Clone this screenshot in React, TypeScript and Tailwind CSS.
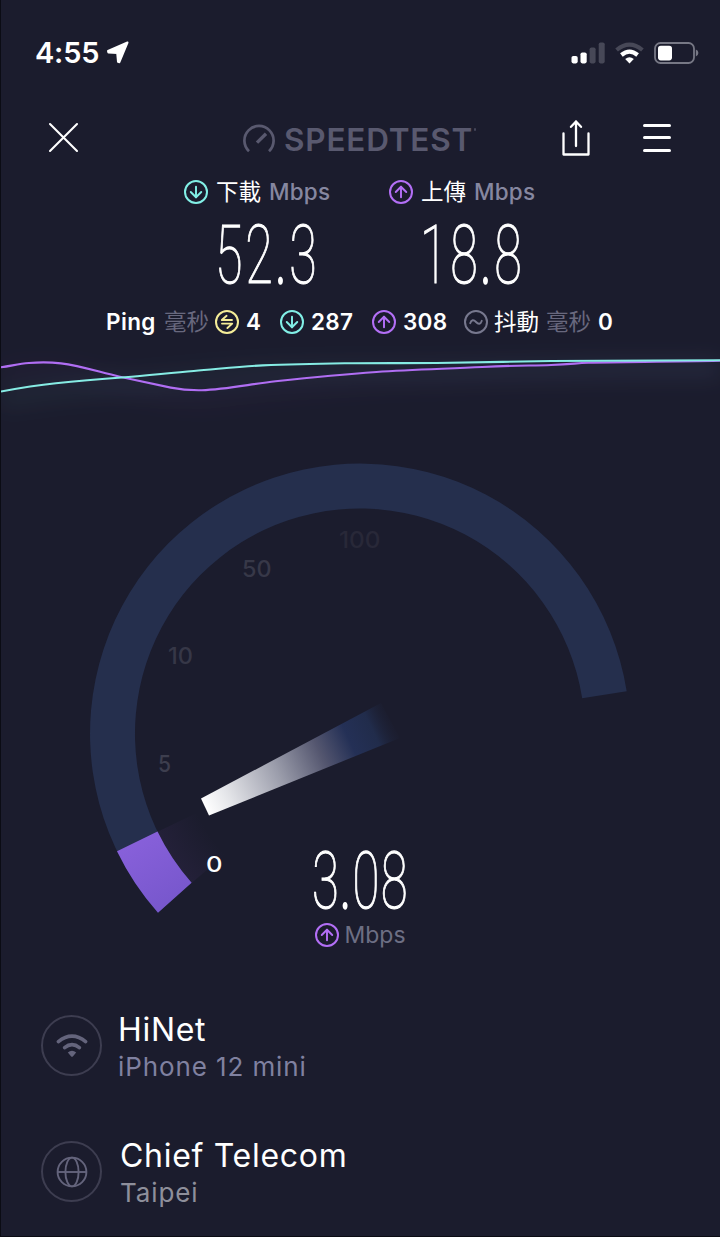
import { ArrowDown, ArrowUp } from 'lucide-react'
import type { ReactNode } from 'react'

const gaugeTicks = [
  { label: '5', x: 158, y: 356, width: 13, fill: '#3d3e4e' },
  { label: '10', x: 168, y: 248, width: 25, fill: '#363747' },
  { label: '50', x: 242, y: 161, width: 29.5, fill: '#373848' },
  { label: '100', x: 339, y: 131.5, width: 41.5, fill: '#282838' },
]

const connections = [
  {
    id: 'client',
    title: 'HiNet',
    subtitle: 'iPhone 12 mini',
    textClass: 'ml-4',
    subtitleClass: 'text-[#8081a0]',
    icon: <WifiGlyph />,
  },
  {
    id: 'server',
    title: 'Chief Telecom',
    subtitle: 'Taipei',
    textClass: 'ml-[18px]',
    subtitleClass: 'text-[#8e8f9b]',
    icon: <GlobeGlyph />,
  },
]

function WifiGlyph() {
  return (
    <svg width="32" height="24" viewBox="0 0 32 24" fill="none" stroke="#64647c" strokeWidth="3.6" strokeLinecap="round" aria-hidden>
      <path d="M2.4 7.6 Q16 -3.4 29.6 7.6" />
      <path d="M8.6 13.6 Q16 7.6 23.4 13.6" />
      <path d="M11.8 18.4 Q16 15 20.2 18.4 L16.8 22.4 Q16 23 15.2 22.4 Z" fill="#64647c" stroke="none" />
    </svg>
  )
}

function GlobeGlyph() {
  return (
    <svg width="32" height="32" viewBox="0 0 32 32" fill="none" stroke="#64647c" strokeWidth="1.9" aria-hidden>
      <circle cx="16" cy="16" r="14.4" />
      <ellipse cx="16" cy="16" rx="6.6" ry="14.4" />
      <path d="M1.6 16h28.8" />
    </svg>
  )
}

function RoundIcon({ colorClass, children }: { colorClass: string; children: ReactNode }) {
  return (
    <span className={`flex h-6 w-6 shrink-0 items-center justify-center rounded-full border-2 ${colorClass}`}>
      {children}
    </span>
  )
}

function DownIcon() {
  return (
    <RoundIcon colorClass="border-[#82efe6] text-[#82efe6]">
      <ArrowDown className="shrink-0" size={18} strokeWidth={2.6} aria-hidden />
    </RoundIcon>
  )
}

function UpIcon() {
  return (
    <RoundIcon colorClass="border-[#b36ff6] text-[#b36ff6]">
      <ArrowUp className="shrink-0" size={18} strokeWidth={2.6} aria-hidden />
    </RoundIcon>
  )
}

function StatusBar() {
  return (
    <div className="flex h-[105px] items-center pl-[34px]">
      <span className="w-[65px] text-[29px] leading-none font-semibold tracking-[-0.2px] whitespace-nowrap">4:55</span>
      <svg className="ml-[6px]" width="23" height="23" viewBox="0 0 23 23" fill="#fff" stroke="#fff" strokeWidth="2" strokeLinejoin="round" aria-hidden>
        <path d="M21.5 1.5 L2 10 L2.4 11.6 L11.2 12 L12 20.8 L13.4 21.2 Z" />
      </svg>
      <div className="mr-[21px] ml-auto flex items-center">
        <svg width="34" height="22" viewBox="0 0 34 22" aria-hidden>
          <rect x="0.5" y="14" width="6.2" height="7.4" rx="1.8" fill="#fff" />
          <rect x="9.5" y="10.5" width="6.2" height="10.9" rx="1.8" fill="#fff" />
          <rect x="18.6" y="5.5" width="6" height="15.9" rx="1.8" fill="#474857" />
          <rect x="27.7" y="0.5" width="6" height="20.9" rx="1.8" fill="#474857" />
        </svg>
        <svg className="ml-[10px]" width="29" height="22" viewBox="0 0 29 22" fill="none" strokeWidth="4.2" aria-hidden>
          <path d="M1.6 8 Q14.5 -2.6 27.4 8" stroke="#474857" />
          <path d="M6.4 13 Q14.5 6.4 22.6 13" stroke="#fff" />
          <path d="M10.2 17 Q14.5 13.4 18.8 17 L14.5 21.4 Z" fill="#fff" />
        </svg>
        <svg className="ml-[10px]" width="45" height="22" viewBox="0 0 45 22" aria-hidden>
          <rect x="1" y="1" width="39" height="20" rx="5.5" fill="none" stroke="#777885" strokeWidth="1.8" />
          <rect x="4" y="3.8" width="14" height="14.6" rx="2.8" fill="#fff" />
          <path d="M41.8 7.6 Q44.4 8.6 44.4 11 Q44.4 13.4 41.8 14.4 Z" fill="#777885" />
        </svg>
      </div>
    </div>
  )
}

function Header() {
  return (
    <header className="flex h-[65px] items-center">
      <button type="button" className="ml-[47px]" aria-label="關閉">
        <svg width="31" height="31" viewBox="0 0 31 31" stroke="#fff" strokeWidth="2.1" strokeLinecap="round" aria-hidden>
          <path d="M2 2l27 27M29 2L2 29" />
        </svg>
      </button>
      <div className="ml-[163px] flex w-[237px] items-center">
        <svg className="mt-[2px] shrink-0" width="34" height="30" viewBox="0 0 34 30" fill="none" stroke="#59596f" strokeWidth="2.7" aria-hidden>
          <path d="M7 27.2 A14.6 14.6 0 1 1 27 27.2" />
          <path d="M15 18.6 L24 9.8" strokeWidth="3.4" />
        </svg>
        <span className="mt-[4px] ml-[8px] w-[190px] shrink-0 text-[31.5px] leading-none font-semibold tracking-[0.8px] whitespace-nowrap text-[#59596f]">
          SPEEDTEST
        </span>
        <span className="mb-4 h-[3px] w-[2px] shrink-0 rounded-full bg-[#454559]" />
      </div>
      <button type="button" className="ml-[83px]" aria-label="分享">
        <svg width="28" height="36" viewBox="0 0 28 36" fill="none" stroke="#fff" strokeWidth="2.3" strokeLinecap="round" strokeLinejoin="round" aria-hidden>
          <path d="M1.5 13.5V34.5H26.5V13.5" />
          <path d="M14 26V1.5M9 6.8L14 1.5L19 6.8" />
        </svg>
      </button>
      <button type="button" className="mr-[49px] ml-auto flex w-7 flex-col gap-[9.5px]" aria-label="選單">
        <span className="h-[3px] w-full rounded-full bg-white" />
        <span className="h-[3px] w-full rounded-full bg-white" />
        <span className="h-[3px] w-full rounded-full bg-white" />
      </button>
    </header>
  )
}

// Tall hairline digits: thin Roboto squeezed horizontally, with a heavier decimal point
function ThinNumber({ value, sizeClass }: { value: string; sizeClass: string }) {
  const [whole, fraction] = value.split('.')

  return (
    <span
      className={`block h-[60px] origin-left scale-x-[0.62] pt-px font-[Roboto] leading-[60px] font-thin whitespace-nowrap [-webkit-text-stroke:1.1px_white] ${sizeClass}`}
    >
      {whole}
      <span className="[-webkit-text-stroke:3.5px_white]">.</span>
      {fraction}
    </span>
  )
}

function SpeedResult({ icon, label, value }: { icon: ReactNode; label: string; value: string }) {
  return (
    <div className="w-[148px]">
      <div className="flex h-11 items-center">
        {icon}
        <span className="ml-2 w-[45px] text-[22.5px] leading-none whitespace-nowrap">{label}</span>
        <span className="ml-2 text-[22.5px] leading-none font-medium tracking-[0.2px] whitespace-nowrap text-[#8687a0]">Mbps</span>
      </div>
      <div className="mt-[11px] w-[100px] pl-[31px]">
        <ThinNumber value={value} sizeClass="text-[81px] tracking-[4.5px]" />
      </div>
    </div>
  )
}

function LatencyRow() {
  return (
    <div className="mt-[15px] flex h-11 items-center pl-[105px] text-[22.5px] leading-none whitespace-nowrap">
      <span className="w-[51px] font-semibold tracking-[0.4px]">Ping</span>
      <span className="ml-[7px] w-[45px] text-[#68687e]">毫秒</span>
      <span className="ml-[6px]">
        <RoundIcon colorClass="border-[#f5ed98] text-[#f5ed98]">
          <svg width="16" height="16" viewBox="0 0 16 16" fill="none" stroke="currentColor" strokeWidth="1.9" strokeLinecap="round" strokeLinejoin="round" aria-hidden>
            <path d="M7.6 1.8L2.8 6H13" />
            <path d="M3 9.6H13.2L8.4 14" />
          </svg>
        </RoundIcon>
      </span>
      <span className="ml-[7px] w-[15px] font-semibold">4</span>
      <span className="ml-[19px]">
        <DownIcon />
      </span>
      <span className="ml-[7px] w-[43px] font-semibold tracking-[0.3px]">287</span>
      <span className="ml-[18px]">
        <UpIcon />
      </span>
      <span className="ml-[7px] w-[44px] font-semibold tracking-[0.3px]">308</span>
      <span className="ml-[17px]">
        <RoundIcon colorClass="border-[#77788e] text-[#77788e]">
          <svg width="16" height="16" viewBox="0 0 16 16" fill="none" stroke="currentColor" strokeWidth="1.9" strokeLinecap="round" aria-hidden>
            <path d="M2.2 9.2C3.4 5.4 5.8 5.6 8 8S12.6 10.6 13.8 6.8" />
          </svg>
        </RoundIcon>
      </span>
      <span className="ml-[6px] w-[45px]">抖動</span>
      <span className="ml-[7px] w-[45px] text-[#68687e]">毫秒</span>
      <span className="ml-[7px] font-semibold">0</span>
    </div>
  )
}

function HistoryChart() {
  const download =
    'M0 46.5C18 43.2 37 40.2 55 38.3S101 34 124 32.3S170 27.8 193 26S239 21.3 262 20.4S320 18.7 344 18.3S405 18.2 436 18S515 16.4 551 16S664 15.5 720 15.3'
  const upload =
    'M0 22.3C12 20.5 18 18.8 28 18S50 17.2 60 18.4C80 20.8 100 27.6 119 31.7S160 40.6 170 42.6S190 45.4 201 45.2C225 44.6 250 39 275 36.3S340 29.5 376 27S447 23.8 482 22S530 20.8 551 20S575 18.2 588 17.7C625 16.8 670 17 720 15.8'

  return (
    <svg className="block h-[72px] w-full overflow-visible" viewBox="0 -1 720 72" preserveAspectRatio="none" fill="none" aria-hidden>
      <defs>
        <filter id="line-glow" filterUnits="userSpaceOnUse" x="-20" y="-30" width="760" height="140">
          <feGaussianBlur stdDeviation="10" />
        </filter>
      </defs>
      <g filter="url(#line-glow)" strokeWidth="18" transform="translate(0 8)">
        <path d={upload} stroke="#b36ff6" opacity="0.03" />
        <path d={download} stroke="#82efe6" opacity="0.05" />
      </g>
      <path d={upload} stroke="#b06ef3" strokeWidth="2.1" />
      <path d={download} stroke="#86ece4" strokeWidth="2.1" />
    </svg>
  )
}

function Gauge() {
  return (
    <section className="relative h-[591px]">
      <svg className="block" width="719" height="520" viewBox="1 0 719 520" aria-hidden>
        <defs>
          <linearGradient id="needle" gradientUnits="userSpaceOnUse" x1="205" y1="391" x2="397" y2="301">
            <stop offset="0" stopColor="#fff" />
            <stop offset="0.12" stopColor="#e4e5e9" />
            <stop offset="0.38" stopColor="#9b9dab" />
            <stop offset="0.6" stopColor="#54566f" />
            <stop offset="0.75" stopColor="#243056" />
            <stop offset="0.87" stopColor="#212c4b" />
            <stop offset="1" stopColor="#1b1c2d" stopOpacity="0" />
          </linearGradient>
          <linearGradient id="progress" x1="0" y1="0" x2="0.6" y2="1">
            <stop offset="0" stopColor="#8b62dd" />
            <stop offset="1" stopColor="#7757cc" />
          </linearGradient>
          <radialGradient id="progress-glow" gradientUnits="userSpaceOnUse" cx="360" cy="317.5" r="226">
            <stop offset="0.8" stopColor="#7b4bb0" stopOpacity="0" />
            <stop offset="1" stopColor="#7b4bb0" stopOpacity="0.09" />
          </radialGradient>
        </defs>
        <path d="M158 496.7 A270 270 0 1 1 626.7 275.3 L582.2 282.3 A225 225 0 1 0 191.6 466.8 Z" fill="#252f4d" />
        <path d="M157 416 A225 225 0 0 0 191.6 467 L235 430 L205 393 Z" fill="url(#progress-glow)" />
        <path d="M158 496.7 A270 270 0 0 1 117 435.2 L157.5 415.6 A225 225 0 0 0 191.6 466.8 Z" fill="url(#progress)" />
        <path d="M201 382.5 L381 287 L400 322 L209 399.5 Z" fill="url(#needle)" />
        <g fontFamily="Inter, sans-serif" fontSize="23" fontWeight="500">
          {gaugeTicks.map((tick) => (
            <text key={tick.label} x={tick.x} y={tick.y} fill={tick.fill} textLength={tick.width} lengthAdjust="spacingAndGlyphs">
              {tick.label}
            </text>
          ))}
        </g>
        <text x="206" y="456" fill="#fff" fontFamily="Inter, sans-serif" fontSize="22" fontWeight="500" textLength="16.5" lengthAdjust="spacingAndGlyphs">
          0
        </text>
      </svg>
      <div className="absolute top-[434px] left-[311px] w-[100px]">
        <ThinNumber value="3.08" sizeClass="text-[79px] tracking-[2.5px]" />
        <div className="mt-[13px] flex h-6 items-center pl-[2.5px]">
          <UpIcon />
          <span className="ml-[6px] text-[23px] leading-none whitespace-nowrap text-[#6d6f84]">Mbps</span>
        </div>
      </div>
    </section>
  )
}

export default function App() {
  return (
    <main className="h-[1237px] w-[720px] overflow-hidden border-b border-l border-[#0b0c14] bg-[#1b1c2d] font-['Inter','Noto_Sans_CJK_TC',sans-serif] text-white">
      <StatusBar />
      <Header />
      <section className="flex gap-[57px] pl-[183px]">
        <SpeedResult icon={<DownIcon />} label="下載" value="52.3" />
        <SpeedResult icon={<UpIcon />} label="上傳" value="18.8" />
      </section>
      <LatencyRow />
      <HistoryChart />
      <Gauge />
      <section className="flex flex-col gap-[46px] pl-10">
        {connections.map((item) => (
          <div key={item.id} className="flex h-20 items-center">
            <span className="mb-[3px] flex h-[61px] w-[61px] shrink-0 items-center justify-center rounded-full border-[2.5px] border-[#3d3d50]">
              {item.icon}
            </span>
            <div className={item.textClass}>
              <p className="pt-px text-[32px] leading-[39px] tracking-[0.7px] whitespace-nowrap">{item.title}</p>
              <p className={`text-[26px] leading-9 tracking-[0.9px] whitespace-nowrap ${item.subtitleClass}`}>{item.subtitle}</p>
            </div>
          </div>
        ))}
      </section>
    </main>
  )
}
